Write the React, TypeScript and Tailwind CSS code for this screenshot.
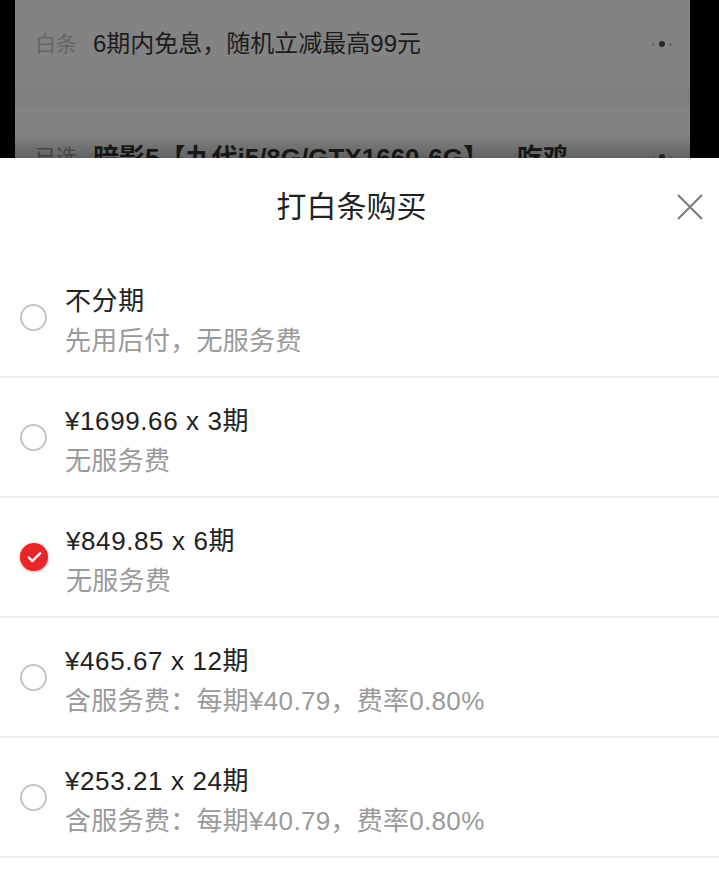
import { Check } from "lucide-react";

type Plan = {
  title: string;
  desc: string;
  checked?: boolean;
};

const plans: Plan[] = [
  { title: "不分期", desc: "先用后付，无服务费" },
  { title: "¥1699.66 x 3期", desc: "无服务费" },
  { title: "¥849.85 x 6期", desc: "无服务费", checked: true },
  { title: "¥465.67 x 12期", desc: "含服务费：每期¥40.79，费率0.80%" },
  { title: "¥253.21 x 24期", desc: "含服务费：每期¥40.79，费率0.80%" },
];

const Dots = () => (
  <div className="flex items-center gap-[4px]">
    <span className="w-[3px] h-[3px] rounded-full bg-[#6a6a6a]" />
    <span className="w-[6px] h-[6px] rounded-full bg-[#2a2a2a]" />
    <span className="w-[3px] h-[3px] rounded-full bg-[#6a6a6a]" />
  </div>
);

const Radio = ({ checked }: { checked?: boolean }) =>
  checked ? (
    <div className="w-[28px] h-[28px] rounded-full bg-[#e8262a] flex items-center justify-center shadow-[0_1px_3px_rgba(232,38,42,0.45)]">
      <Check size={17} strokeWidth={3.4} color="#fff" />
    </div>
  ) : (
    <div className="w-[27px] h-[27px] rounded-full border-2 border-[#c4c4c4]" />
  );

// dimmed page behind the sheet
const Backdrop = () => (
  <div className="relative h-[158px] overflow-hidden bg-black pl-[15px] pr-[29px]">
    <div className="h-full bg-[#838383]">
      <div className="h-[88px] flex items-center pl-[20px] pr-[18px]">
        <span className="text-[21px] text-[#666] w-[58px]">白条</span>
        <span className="flex-1 text-[24px] text-[#1c1c1c]">6期内免息，随机立减最高99元</span>
        <Dots />
      </div>
      <div className="h-[18px] bg-[#7f7f7f]" />
      <div className="flex items-start pl-[20px] pr-[18px] pt-[33px]">
        <span className="text-[21px] text-[#555] w-[58px] pt-[2px]">已选</span>
        <span className="flex-1 text-[26px] font-semibold text-[#1c1c1c] whitespace-nowrap">
          暗影5【九代i5/8G/GTX1660-6G】
          <span className="ml-[28px]">吃鸡</span>
        </span>
        <div className="pt-[15px]">
          <Dots />
        </div>
      </div>
    </div>
    <div className="absolute left-0 right-0 bottom-0 h-[24px] bg-gradient-to-b from-transparent to-[rgba(0,0,0,0.25)]" />
  </div>
);

const PlanRow = ({ plan }: { plan: Plan }) => (
  <div className="h-[120px] flex items-center border-b-2 border-[#f0f0f0] pl-[20px]">
    <Radio checked={plan.checked} />
    <div className="flex flex-col pt-[8px] ml-[18px]">
      <span className="text-[26px] leading-[40px] tracking-[0.6px] text-[#222]">{plan.title}</span>
      <span className="text-[26px] leading-[40px] tracking-[0.3px] text-[#9a9a9a]">{plan.desc}</span>
    </div>
  </div>
);

export default function App() {
  return (
    <div
      className="w-[719px] h-[888px] overflow-hidden bg-white"
      style={{ fontFamily: '"Liberation Sans", "Noto Sans CJK SC", sans-serif' }}
    >
      <Backdrop />
      <div className="bg-white">
        <div className="relative h-[100px] flex items-center justify-center pb-[4px] pr-[16px]">
          <span className="text-[30px] text-[#222]">打白条购买</span>
          <svg
            className="absolute right-[15px] top-[35px]"
            width="28"
            height="28"
            viewBox="0 0 28 28"
            fill="none"
            stroke="#7a7a7a"
            strokeWidth="2"
          >
            <path d="M2 2 L26 26 M26 2 L2 26" />
          </svg>
        </div>
        {plans.map((p) => (
          <PlanRow key={p.title} plan={p} />
        ))}
      </div>
    </div>
  );
}
